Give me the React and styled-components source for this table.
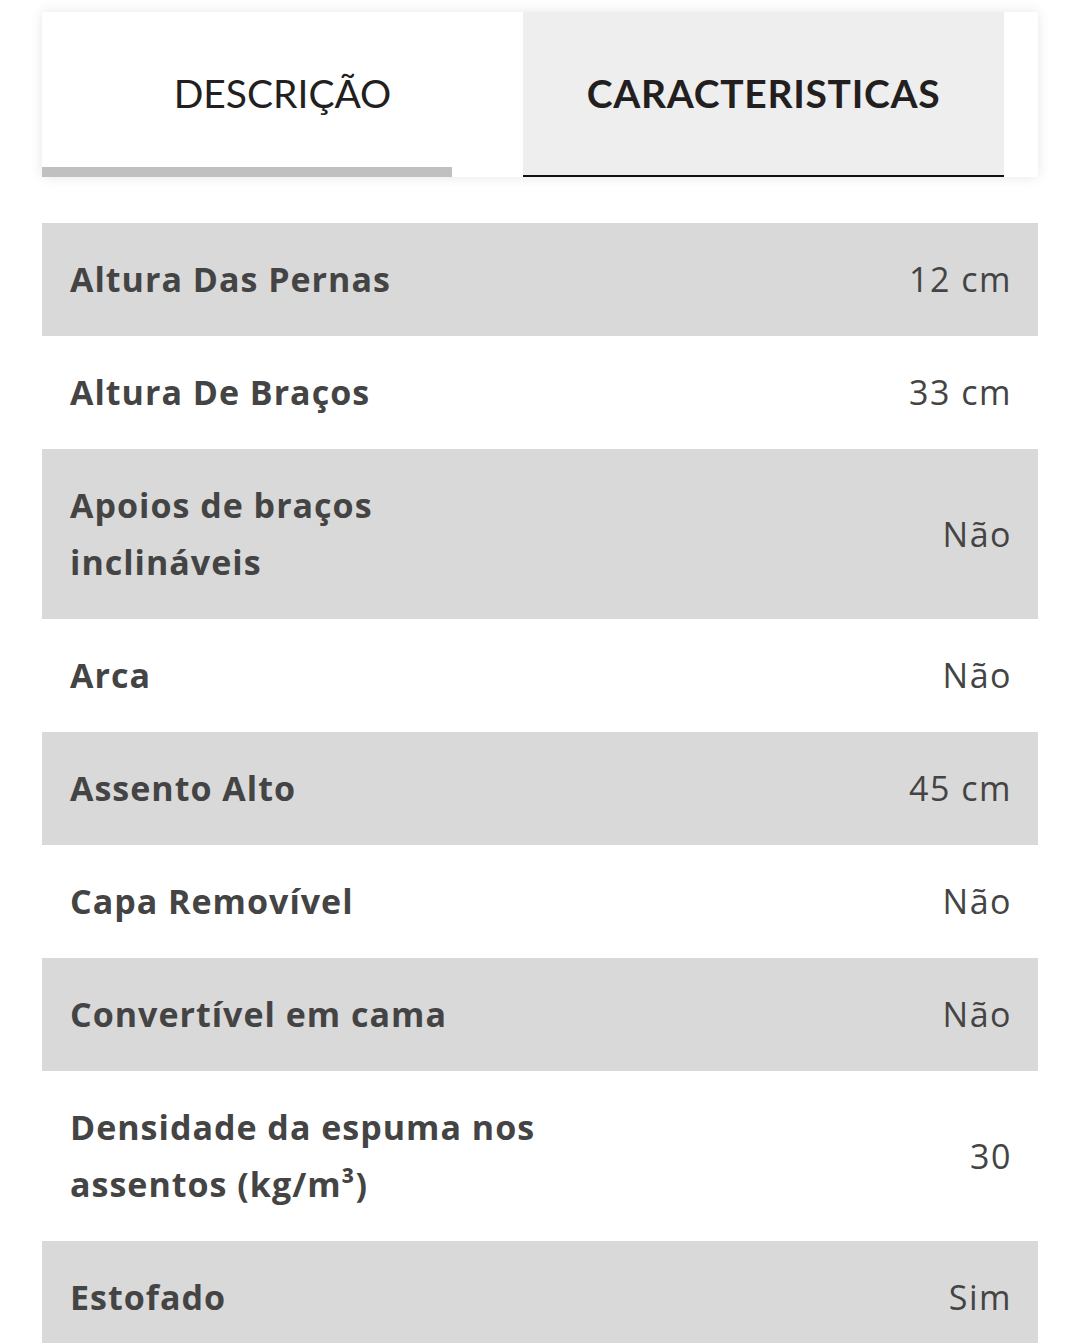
import React from "react";
import styled, { createGlobalStyle } from "styled-components";

const GlobalStyle = createGlobalStyle`
  html, body {
    margin: 0;
    padding: 0;
    background: #ffffff;
  }
  body {
    font-family: "Open Sans", "Noto Sans", sans-serif;
  }
`;

const Page = styled.div`
  padding: 12px 42px 0;
`;

const TabBar = styled.div`
  display: flex;
  height: 165px;
  background: #ffffff;
  box-shadow: 0 0 12px rgba(0, 0, 0, 0.1);
`;

const Tab = styled.div`
  position: relative;
  box-sizing: border-box;
  width: 481px;
  display: flex;
  align-items: center;
  justify-content: center;
  padding-bottom: 2px;
  font-family: "Lato", sans-serif;
  font-size: 39px;
  color: #231f20;
  font-weight: ${(p) => (p.active ? 700 : 400)};
  letter-spacing: ${(p) => (p.active ? "0.7px" : "0")};
  background: ${(p) => (p.active ? "#eeeeee" : "#ffffff")};
  border-bottom: 2px solid ${(p) => (p.active ? "#111111" : "transparent")};
`;

const Indicator = styled.span`
  position: absolute;
  left: 0;
  bottom: -2px;
  width: 410px;
  height: 10px;
  background: #c0c0c0;
`;

const Table = styled.div`
  margin-top: 46px;
  display: flex;
  flex-direction: column;
`;

const Row = styled.div`
  display: grid;
  grid-template-columns: 480px 1fr;
  align-items: center;
  padding: 28px;
  background: ${(p) => (p.shaded ? "#d9d9d9" : "#ffffff")};
  color: #444444;
  font-size: 34px;
  line-height: 57px;
  letter-spacing: 1px;
`;

const Label = styled.div`
  font-weight: 700;
`;

const Value = styled.div`
  text-align: right;
  font-weight: 400;
  letter-spacing: 1.5px;
  margin-right: -2px;
`;

const specs = [
  ["Altura Das Pernas", "12 cm"],
  ["Altura De Braços", "33 cm"],
  ["Apoios de braços inclináveis", "Não"],
  ["Arca", "Não"],
  ["Assento Alto", "45 cm"],
  ["Capa Removível", "Não"],
  ["Convertível em cama", "Não"],
  ["Densidade da espuma nos assentos (kg/m³)", "30"],
  ["Estofado", "Sim"],
];

export default function App() {
  return (
    <Page>
      <GlobalStyle />
      <TabBar>
        <Tab>
          DESCRIÇÃO
          <Indicator />
        </Tab>
        <Tab active>CARACTERISTICAS</Tab>
      </TabBar>
      <Table>
        {specs.map(([label, value], i) => (
          <Row key={label} shaded={i % 2 === 0}>
            <Label>{label}</Label>
            <Value>{value}</Value>
          </Row>
        ))}
      </Table>
    </Page>
  );
}
